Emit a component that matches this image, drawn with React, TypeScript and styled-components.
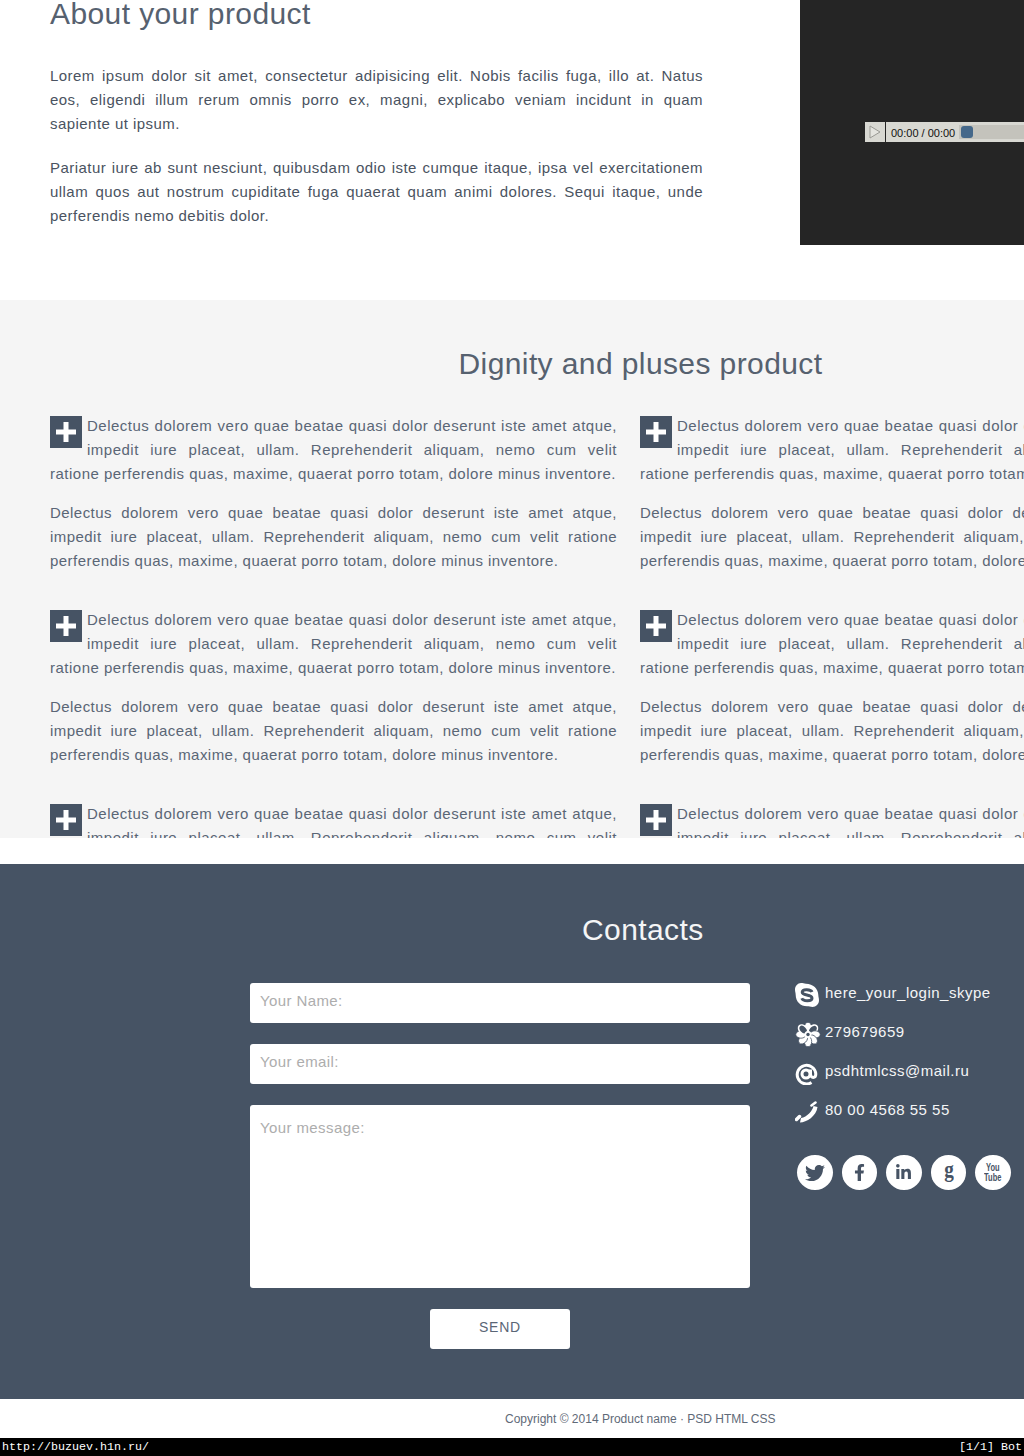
import styled, { createGlobalStyle } from 'styled-components';
import { FaTwitter, FaFacebookF, FaLinkedinIn } from 'react-icons/fa';

const GlobalStyle = createGlobalStyle`
  html, body {
    margin: 0;
    padding: 0;
    background: #fff;
  }
  * {
    box-sizing: border-box;
  }
`;

const Page = styled.div`
  width: 1024px;
  height: 1456px;
  overflow: hidden;
  font-family: "Liberation Sans", Arial, sans-serif;
  color: #465364;
  display: flex;
  flex-direction: column;
`;

const About = styled.section`
  height: 300px;
  flex-shrink: 0;
  display: flex;
  padding-left: 50px;
  overflow: hidden;
`;
const AboutText = styled.div`
  width: 653px;
  flex-shrink: 0;
  margin-right: 97px;
`;
const AboutTitle = styled.h2`
  font-size: 30px;
  font-weight: 400;
  line-height: 34px;
  margin: -3px 0 33px;
  color: #56616f;
  letter-spacing: 0.4px;
`;
const Paragraph = styled.p`
  font-size: 15px;
  line-height: 24px;
  letter-spacing: 0.45px;
  text-align: justify;
  margin: 0 0 20px;
  color: #4a5361;
`;
const Video = styled.div`
  width: 224px;
  height: 245px;
  flex-shrink: 0;
  background: #252525;
  padding: 122px 0 0 65px;
`;
const Player = styled.div`
  width: 159px;
  height: 20px;
  background: #d8d8d2;
  display: flex;
  align-items: center;
`;
const PlayButton = styled.div`
  width: 21px;
  height: 20px;
  border-right: 1px solid #252525;
  display: flex;
  align-items: center;
  justify-content: center;
`;
const PlayerTime = styled.span`
  width: 73px;
  height: 20px;
  padding-left: 5px;
  font-size: 11px;
  line-height: 22px;
  color: #111;
  white-space: nowrap;
`;
const PlayerTrack = styled.div`
  flex: 1;
  height: 14px;
  background: #c4c3bc;
  padding: 1px 0 0 2px;
`;
const PlayerThumb = styled.div`
  width: 12px;
  height: 12px;
  border-radius: 3px;
  background: #45688a;
`;

const Features = styled.section`
  height: 538px;
  flex-shrink: 0;
  overflow: hidden;
  background: #f5f5f5;
  padding-left: 50px;
`;
const FeaturesInner = styled.div`
  width: 1181px;
`;
const FeaturesTitle = styled.h2`
  font-size: 30px;
  font-weight: 400;
  line-height: 34px;
  text-align: center;
  letter-spacing: 0.4px;
  color: #56616f;
  margin: 47px 0 33px;
`;
const FeatureGrid = styled.div`
  display: grid;
  grid-template-columns: 567px 567px;
  column-gap: 23px;
  row-gap: 35px;
`;
const Feature = styled.div`
  text-align: justify;
`;
const PlusBox = styled.span`
  float: left;
  width: 32px;
  height: 32px;
  margin: 2px 5px 0 0;
  background: #465364;
  display: flex;
  align-items: center;
  justify-content: center;
`;
const FeatureText = styled.p`
  font-size: 15px;
  line-height: 24px;
  letter-spacing: 0.45px;
  margin: 0;
  color: #5a6676;
`;
const FeatureLead = styled(FeatureText)`
  letter-spacing: 0.5px;
  margin-bottom: 15px;
`;

const Gap = styled.div`
  height: 26px;
  flex-shrink: 0;
`;

const Contacts = styled.section`
  height: 535px;
  flex-shrink: 0;
  background: #465364;
  color: #fff;
  padding-top: 49px;
`;
const ContactsTitle = styled.h2`
  font-size: 30px;
  font-weight: 400;
  line-height: 34px;
  letter-spacing: 0.4px;
  margin: 0 0 36px 582px;
  color: #f4f5f6;
`;
const ContactsBody = styled.div`
  display: flex;
  padding-left: 250px;
`;
const Form = styled.div`
  width: 500px;
  display: flex;
  flex-direction: column;
  align-items: center;
  gap: 21px;
  margin-right: 45px;
`;
const Field = styled.div<{ $tall?: boolean }>`
  width: 100%;
  height: ${p => (p.$tall ? '183px' : '40px')};
  background: #fff;
  border-radius: 3px;
  padding: ${p => (p.$tall ? '14px' : '9px')} 10px 0;
  font-size: 15px;
  line-height: 18px;
  letter-spacing: 0.4px;
  color: #adadad;
`;
const SendButton = styled.div`
  width: 140px;
  height: 40px;
  background: #fff;
  border-radius: 3px;
  text-align: center;
  font-size: 14px;
  line-height: 36px;
  letter-spacing: 0.8px;
  color: #5a6676;
`;
const ContactSide = styled.div`
  display: flex;
  flex-direction: column;
`;
const ContactRow = styled.div`
  height: 39px;
  display: flex;
  align-items: flex-start;
  font-size: 15px;
  line-height: 20px;
  letter-spacing: 0.5px;
  color: #f4f5f6;
  white-space: nowrap;
`;
const ContactIcon = styled.span<{ $top?: number }>`
  width: 30px;
  flex-shrink: 0;
  display: flex;
  margin-top: ${p => p.$top ?? 0}px;
  color: #fff;
`;
const Socials = styled.div`
  display: flex;
  gap: 9px;
  margin: 16px 0 0 2px;
`;
const SocialCircle = styled.span`
  width: 35.6px;
  height: 35px;
  border-radius: 50%;
  background: #fff;
  color: #465364;
  display: flex;
  align-items: center;
  justify-content: center;
  overflow: hidden;
`;
const GoogleMark = styled.span`
  font-family: "Liberation Serif", serif;
  font-weight: 700;
  font-size: 24px;
  line-height: 30px;
  margin-top: -7px;
  transform: scaleX(0.8);
`;
const YouTubeMark = styled.span`
  font-family: "Liberation Sans", sans-serif;
  font-weight: 700;
  font-size: 11px;
  line-height: 9.5px;
  text-align: center;
  transform: scaleX(0.68);
`;

const Footer = styled.footer`
  height: 39px;
  flex-shrink: 0;
  padding-left: 505px;
  font-size: 12px;
  line-height: 41px;
  color: #5f6a78;
  white-space: nowrap;
`;
const StatusBar = styled.div`
  height: 18px;
  flex-shrink: 0;
  background: #000;
  color: #fff;
  font-family: "Liberation Mono", monospace;
  font-size: 11.67px;
  line-height: 18px;
  padding: 0 2px;
  display: flex;
  justify-content: space-between;
`;

const featureCopy = 'Delectus dolorem vero quae beatae quasi dolor deserunt iste amet atque, impedit iure placeat, ullam. Reprehenderit aliquam, nemo cum velit ratione perferendis quas, maxime, quaerat porro totam, dolore minus inventore.';

const SLATE = '#465364';

const PlusIcon = () => (
  <svg width="20" height="20" viewBox="0 0 20 20">
    <path d="M7.500 0h5v7.500H20v5h-7.500V20h-5v-7.500H0v-5h7.500z" fill="#fff" />
  </svg>
);

const SkypeIcon = () => (
  <svg width="24" height="24" viewBox="0 0 24 24">
    <path fill="#fff" d="M6 0c2 0 3 .7 5 .7 7 0 12.300 5 12.300 11.300 0 2 .7 3 .7 5.500 0 3.500-3 6.500-6.500 6.500-2 0-3.500-.7-5.500-.7C5.500 23.300.7 18.500.7 12 .7 10 0 8.500 0 6.500 0 3 2.700 0 6 0z" />
    <path fill="none" stroke={SLATE} strokeWidth="3" d="M17 9c-1-2.500-9.500-3.500-9.800.2C7 13 17 11 17 15.200c0 3.300-9 3.300-10.200 0" />
  </svg>
);

const IcqIcon = () => (
  <svg width="26" height="25" viewBox="0 0 26 25">
    {[0, 45, 90, 135, 180, 225, 270, 315].map((angle, i) => (
      <ellipse
        key={angle}
        cx="13"
        cy="5.500"
        rx="3.700"
        ry="5.200"
        transform={`rotate(${angle} 13 12.500)`}
        fill={i === 7 || i === 1 ? SLATE : '#fff'}
        stroke={i === 7 || i === 1 ? '#fff' : SLATE}
        strokeWidth={i === 7 || i === 1 ? 1.600 : 0.800}
      />
    ))}
    <circle cx="13" cy="12.500" r="3.500" fill="#fff" />
    <circle cx="13" cy="12.500" r="1.700" fill={SLATE} />
  </svg>
);

const AtIcon = () => (
  <svg width="23" height="22" viewBox="0 0 23 22" fill="none" stroke="#fff" strokeWidth="3">
    <path d="M16.500 19.500A9.300 9.300 0 1 1 20.800 11c0 4.500-5.300 4.500-5.300 0V6.500" />
    <circle cx="11" cy="11" r="4" />
  </svg>
);

const PhoneIcon = () => (
  <svg width="24" height="24" viewBox="3 3 24 24">
    <path fill="#fff" d="M8 24.500c6.500 0 16.500-6.500 17.500-15.500l-4-1c-1 5-6.500 11-12.500 12z" />
    <path fill="none" stroke="#fff" strokeLinecap="round" strokeWidth="3.500" d="M4.500 21.500l3-3" />
    <path fill="none" stroke="#fff" strokeLinecap="round" strokeWidth="2.600" d="M19.500 7.500l4-3" />
  </svg>
);

function App() {
  const items = [0, 1, 2, 3, 4, 5];
  return (
    <Page>
      <GlobalStyle />
      <About>
        <AboutText>
          <AboutTitle>About your product</AboutTitle>
          <Paragraph>Lorem ipsum dolor sit amet, consectetur adipisicing elit. Nobis facilis fuga, illo at. Natus eos, eligendi illum rerum omnis porro ex, magni, explicabo veniam incidunt in quam sapiente ut ipsum.</Paragraph>
          <Paragraph>Pariatur iure ab sunt nesciunt, quibusdam odio iste cumque itaque, ipsa vel exercitationem ullam quos aut nostrum cupiditate fuga quaerat quam animi dolores. Sequi itaque, unde perferendis nemo debitis dolor.</Paragraph>
        </AboutText>
        <Video>
          <Player>
            <PlayButton>
              <svg width="14" height="14" viewBox="0 0 14 14">
                <path d="M2 1l10 6-10 6z" fill="#e4e4df" stroke="#9a9a94" />
              </svg>
            </PlayButton>
            <PlayerTime>00:00 / 00:00</PlayerTime>
            <PlayerTrack>
              <PlayerThumb />
            </PlayerTrack>
          </Player>
        </Video>
      </About>

      <Features>
        <FeaturesInner>
          <FeaturesTitle>Dignity and pluses product</FeaturesTitle>
          <FeatureGrid>
            {items.map(i => (
              <Feature key={i}>
                <PlusBox><PlusIcon /></PlusBox>
                <FeatureLead>{featureCopy}</FeatureLead>
                <FeatureText>{featureCopy}</FeatureText>
              </Feature>
            ))}
          </FeatureGrid>
        </FeaturesInner>
      </Features>

      <Gap />

      <Contacts>
        <ContactsTitle>Contacts</ContactsTitle>
        <ContactsBody>
          <Form>
            <Field>Your Name:</Field>
            <Field>Your email:</Field>
            <Field $tall>Your message:</Field>
            <SendButton>SEND</SendButton>
          </Form>
          <ContactSide>
            <ContactRow>
              <ContactIcon><SkypeIcon /></ContactIcon>
              here_your_login_skype
            </ContactRow>
            <ContactRow>
              <ContactIcon><IcqIcon /></ContactIcon>
              279679659
            </ContactRow>
            <ContactRow>
              <ContactIcon $top={2}><AtIcon /></ContactIcon>
              psdhtmlcss@mail.ru
            </ContactRow>
            <ContactRow>
              <ContactIcon $top={1}><PhoneIcon /></ContactIcon>
              80 00 4568 55 55
            </ContactRow>
            <Socials>
              <SocialCircle><FaTwitter size={20} /></SocialCircle>
              <SocialCircle><FaFacebookF size={17} /></SocialCircle>
              <SocialCircle><FaLinkedinIn size={17} /></SocialCircle>
              <SocialCircle><GoogleMark>g</GoogleMark></SocialCircle>
              <SocialCircle><YouTubeMark>You<br />Tube</YouTubeMark></SocialCircle>
            </Socials>
          </ContactSide>
        </ContactsBody>
      </Contacts>

      <Footer>Copyright © 2014 Product name · PSD HTML CSS</Footer>
      <StatusBar>
        <span>http://buzuev.h1n.ru/</span>
        <span>[1/1] Bot</span>
      </StatusBar>
    </Page>
  );
}

export default App;
